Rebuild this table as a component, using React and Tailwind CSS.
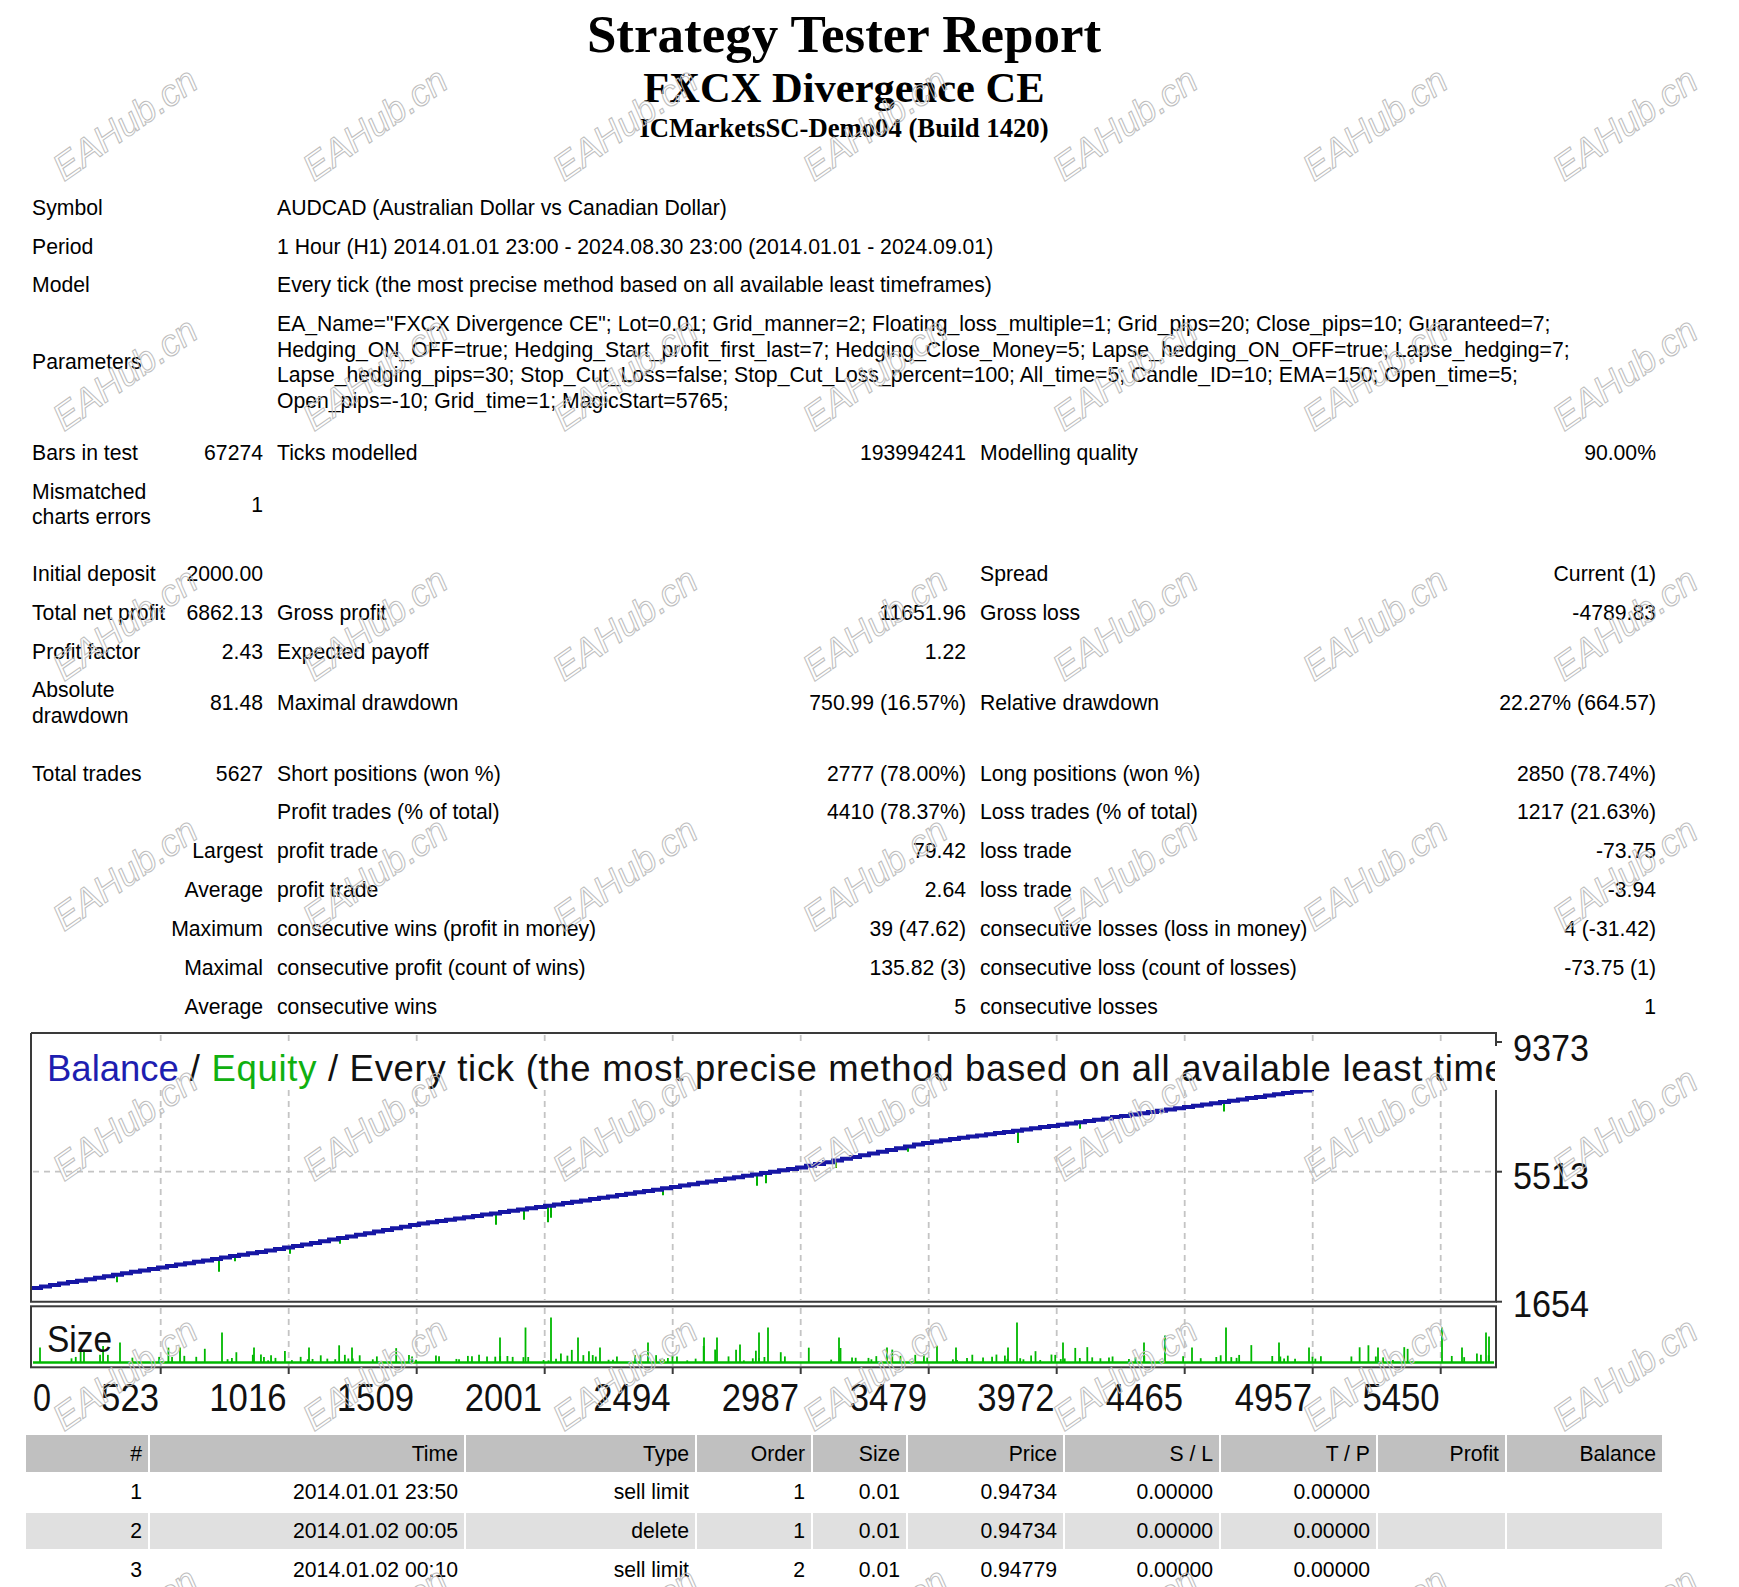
import React from "react";

const SANS = "font-['Liberation_Sans',Arial,sans-serif]";

function Cell({ children, right, className = "" }) {
  return (
    <div
      className={
        "flex items-center px-[6px] py-[5.675px] whitespace-nowrap " +
        (right ? "justify-end text-right " : "") +
        className
      }
    >
      <div>{children}</div>
    </div>
  );
}

function Empty({ className = "" }) {
  return <div className={className} />;
}

const anchors = [
  [32, 1289],
  [160.7, 1268],
  [288, 1248],
  [416, 1225],
  [543, 1207],
  [671, 1188],
  [800, 1168],
  [927.5, 1143],
  [1056, 1126],
  [1184, 1108],
  [1312, 1090],
];

function ly(x) {
  for (let i = 0; i < anchors.length - 1; i++) {
    const [x0, y0] = anchors[i];
    const [x1, y1] = anchors[i + 1];
    if (x <= x1) {
      return y0 + ((x - x0) / (x1 - x0)) * (y1 - y0);
    }
  }
  return anchors[anchors.length - 1][1];
}

function Chart() {
  const gx = Array.from({ length: 11 }, (_, k) => 160.7 + 128 * k);

  let d = `M32 ${ly(32).toFixed(1)}`;
  for (let x = 32; x < 1312; x += 9) {
    const nx = Math.min(x + 9, 1312);
    d += ` H${nx.toFixed(1)} V${ly(nx).toFixed(1)}`;
  }

  const dips = [
    [117, 6],
    [219, 12],
    [235, 4],
    [290, 5],
    [340, 4],
    [496, 10],
    [524, 9],
    [548, 15],
    [551, 11],
    [663, 5],
    [757, 10],
    [766, 9],
    [836, 6],
    [908, 4],
    [1018, 11],
    [1080, 5],
    [1224, 8],
  ];

  let s = 987654;
  const rnd = () => {
    s = (s * 16807) % 2147483647;
    return s / 2147483647;
  };
  const bars = [];
  for (let x = 35; x < 1493; x += 4) {
    const r = rnd();
    if (r < 0.42) {
      let h = 2 + rnd() * 6;
      if (rnd() < 0.18) h = 8 + rnd() * 10;
      bars.push([x + rnd() * 2, h]);
    }
  }
  const tall = [
    [40, 15], [120, 20], [180, 15], [222, 30], [254, 15], [309, 15], [352, 15],
    [500, 25], [525.5, 35], [551, 45], [578, 25], [600, 15], [648, 20], [704, 25],
    [717, 25], [740, 18], [759, 30], [768, 35], [839, 25], [887, 15], [956, 15],
    [1008, 15], [1017, 40], [1063, 20], [1144, 20], [1165, 27], [1192, 15],
    [1226, 35], [1279, 20], [1309, 15], [1378, 15], [1442, 35], [1462, 15],
    [1486, 30], [1489, 26],
  ];
  const allBars = bars.concat(tall);

  const xl = [
    ["523", 159],
    ["1016", 286.5],
    ["1509", 414],
    ["2001", 542],
    ["2494", 670.5],
    ["2987", 799],
    ["3479", 927],
    ["3972", 1054.5],
    ["4465", 1183],
    ["4957", 1312],
    ["5450", 1439.6],
  ];
  const yl = [
    ["9373", 1062],
    ["5513", 1190],
    ["1654", 1318],
  ];

  return (
    <svg width="1640" height="406" className="block" xmlns="http://www.w3.org/2000/svg">
      <defs>
        <clipPath id="titleclip">
          <rect x="0" y="1000" width="1495" height="200" />
        </clipPath>
      </defs>
      <g transform="translate(-24 -1028)">
        {gx.map((x, i) => (
          <g key={i}>
            <line x1={x} y1="1036" x2={x} y2="1301" stroke="#c4c4c4" strokeWidth="1.8" strokeDasharray="6 5" />
            <line x1={x} y1="1309" x2={x} y2="1367" stroke="#c4c4c4" strokeWidth="1.8" strokeDasharray="6 5" />
          </g>
        ))}
        <line x1="33" y1="1172.7" x2="1495" y2="1172.7" stroke="#c4c4c4" strokeWidth="1.8" strokeDasharray="6 5" />

        {dips.map(([x, dd], i) => {
          const y = ly(x);
          return <line key={i} x1={x} y1={y} x2={x} y2={y + 2 + dd} stroke="#00b000" strokeWidth="2" />;
        })}
        <path d={d} fill="none" stroke="#1616a4" strokeWidth="4" strokeLinejoin="miter" />

        {allBars.map(([x, h], i) => (
          <line key={i} x1={x} y1="1363.5" x2={x} y2={1363.5 - h} stroke="#00b800" strokeWidth="1.8" />
        ))}
        <line x1="33" y1="1363.5" x2="1494" y2="1363.5" stroke="#00b800" strokeWidth="2.4" />

        <rect x="40" y="1047" width="1460" height="44" fill="#ffffff" />
        <g clipPath="url(#titleclip)">
          <text x="47" y="1082" fontFamily="Liberation Sans, Arial, sans-serif" fontSize="36.5" fill="#111111">
            <tspan fill="#1e1eb0">Balance</tspan>
            <tspan letterSpacing="0.7"> / </tspan>
            <tspan fill="#10b010" letterSpacing="0.7">Equity</tspan>
            <tspan letterSpacing="0.7"> / Every tick (the most precise method based on all available least timeframes)</tspan>
          </text>
        </g>

        <path d="M31 1034 H1496 V1047 M1496 1091 V1302.7 H31 V1034" fill="none" stroke="#3a3a3a" strokeWidth="2" />
        <rect x="31" y="1307.3" width="1465" height="61" fill="none" stroke="#3a3a3a" strokeWidth="2" />

        {[1043, 1172.7, 1302.7].map((y, i) => (
          <line key={i} x1="1496" y1={y} x2="1502" y2={y} stroke="#3a3a3a" strokeWidth="2" />
        ))}
        {gx.map((x, i) => (
          <line key={i} x1={x} y1="1368" x2={x} y2="1375" stroke="#3a3a3a" strokeWidth="2" />
        ))}

        <text x="47" y="1353" fontFamily="Liberation Sans, Arial, sans-serif" fontSize="37" textLength="65" lengthAdjust="spacingAndGlyphs" fill="#111111">
          Size
        </text>

        <text x="33" y="1412" fontFamily="Liberation Sans, Arial, sans-serif" fontSize="39" textLength="18" lengthAdjust="spacingAndGlyphs" fill="#111111">
          0
        </text>
        {xl.map(([t, r], i) => {
          const w = t.length * 19.3;
          return (
            <text key={i} x={r - w} y="1412" fontFamily="Liberation Sans, Arial, sans-serif" fontSize="39" textLength={w} lengthAdjust="spacingAndGlyphs" fill="#111111">
              {t}
            </text>
          );
        })}
        {yl.map(([t, y], i) => (
          <text key={i} x="1513" y={y} fontFamily="Liberation Sans, Arial, sans-serif" fontSize="37" textLength="76" lengthAdjust="spacingAndGlyphs" fill="#111111">
            {t}
          </text>
        ))}
      </g>
    </svg>
  );
}

function Watermarks() {
  const items = [];
  for (let j = 0; j < 7; j++) {
    for (let i = 0; i < 7; i++) {
      items.push([125 + 250 * i, 124 + 250 * j]);
    }
  }
  return (
    <div className="pointer-events-none absolute inset-0">
      {items.map(([x, y], k) => (
        <div
          key={k}
          className={
            "absolute -translate-x-1/2 -translate-y-1/2 rotate-[-35deg] whitespace-nowrap italic text-[37px] leading-none text-transparent [-webkit-text-stroke:1px_#bdbdbd] " +
            SANS
          }
          style={{ left: x, top: y }}
        >
          EAHub.cn
        </div>
      ))}
    </div>
  );
}

export default function App() {
  const tradeCols =
    "grid grid-cols-[122px_314px_229px_114px_93px_155px_154px_155px_127px_155px] gap-[2px] px-[2px]";
  const rows = [
    ["1", "2014.01.01 23:50", "sell limit", "1", "0.01", "0.94734", "0.00000", "0.00000", "", ""],
    ["2", "2014.01.02 00:05", "delete", "1", "0.01", "0.94734", "0.00000", "0.00000", "", ""],
    ["3", "2014.01.02 00:10", "sell limit", "2", "0.01", "0.94779", "0.00000", "0.00000", "", ""],
  ];
  const head = ["#", "Time", "Type", "Order", "Size", "Price", "S / L", "T / P", "Profit", "Balance"];

  return (
    <div className={"relative w-[1739px] h-[1587px] overflow-hidden bg-white text-black " + SANS}>
      <div className="ml-[24px] w-[1640px]">
        <div className="pt-[4px] text-center font-['Liberation_Serif','Times_New_Roman',serif] font-bold">
          <div className="text-[53px] leading-[60px]">Strategy Tester Report</div>
          <div className="text-[42.5px] leading-[47px]">FXCX Divergence CE</div>
          <div className="text-[26.7px] leading-[34px]">ICMarketsSC-Demo04 (Build 1420)</div>
        </div>

        <div className="mt-[42px] grid grid-cols-[150px_91px_429px_270px_386px_300px] gap-[2px] p-[2px] text-[21.2px] leading-[25.5px]">
          <Cell className="col-span-2">Symbol</Cell>
          <Cell className="col-span-4">AUDCAD (Australian Dollar vs Canadian Dollar)</Cell>

          <Cell className="col-span-2">Period</Cell>
          <Cell className="col-span-4">1 Hour (H1) 2014.01.01 23:00 - 2024.08.30 23:00 (2014.01.01 - 2024.09.01)</Cell>

          <Cell className="col-span-2">Model</Cell>
          <Cell className="col-span-4">Every tick (the most precise method based on all available least timeframes)</Cell>

          <Cell className="col-span-2">Parameters</Cell>
          <Cell className="col-span-4">
            <div>EA_Name="FXCX Divergence CE"; Lot=0.01; Grid_manner=2; Floating_loss_multiple=1; Grid_pips=20; Close_pips=10; Guaranteed=7;</div>
            <div>Hedging_ON_OFF=true; Hedging_Start_profit_first_last=7; Hedging_Close_Money=5; Lapse_hedging_ON_OFF=true; Lapse_hedging=7;</div>
            <div>Lapse_hedging_pips=30; Stop_Cut_Loss=false; Stop_Cut_Loss_percent=100; All_time=5; Candle_ID=10; EMA=150; Open_time=5;</div>
            <div>Open_pips=-10; Grid_time=1; MagicStart=5765;</div>
          </Cell>

          <div className="col-span-6 h-[11.4px]" />

          <Cell>Bars in test</Cell>
          <Cell right>67274</Cell>
          <Cell>Ticks modelled</Cell>
          <Cell right>193994241</Cell>
          <Cell>Modelling quality</Cell>
          <Cell right>90.00%</Cell>

          <Cell>
            Mismatched
            <br />
            charts errors
          </Cell>
          <Cell right>1</Cell>
          <Empty className="col-span-4" />

          <div className="col-span-6 h-[15.8px]" />

          <Cell>Initial deposit</Cell>
          <Cell right>2000.00</Cell>
          <Empty />
          <Empty />
          <Cell>Spread</Cell>
          <Cell right>Current (1)</Cell>

          <Cell>Total net profit</Cell>
          <Cell right>6862.13</Cell>
          <Cell>Gross profit</Cell>
          <Cell right>11651.96</Cell>
          <Cell>Gross loss</Cell>
          <Cell right>-4789.83</Cell>

          <Cell>Profit factor</Cell>
          <Cell right>2.43</Cell>
          <Cell>Expected payoff</Cell>
          <Cell right>1.22</Cell>
          <Empty />
          <Empty />

          <Cell>
            Absolute
            <br />
            drawdown
          </Cell>
          <Cell right>81.48</Cell>
          <Cell>Maximal drawdown</Cell>
          <Cell right>750.99 (16.57%)</Cell>
          <Cell>Relative drawdown</Cell>
          <Cell right>22.27% (664.57)</Cell>

          <div className="col-span-6 h-[16.8px]" />

          <Cell>Total trades</Cell>
          <Cell right>5627</Cell>
          <Cell>Short positions (won %)</Cell>
          <Cell right>2777 (78.00%)</Cell>
          <Cell>Long positions (won %)</Cell>
          <Cell right>2850 (78.74%)</Cell>

          <Empty />
          <Empty />
          <Cell>Profit trades (% of total)</Cell>
          <Cell right>4410 (78.37%)</Cell>
          <Cell>Loss trades (% of total)</Cell>
          <Cell right>1217 (21.63%)</Cell>

          <Cell right className="col-span-2">Largest</Cell>
          <Cell>profit trade</Cell>
          <Cell right>79.42</Cell>
          <Cell>loss trade</Cell>
          <Cell right>-73.75</Cell>

          <Cell right className="col-span-2">Average</Cell>
          <Cell>profit trade</Cell>
          <Cell right>2.64</Cell>
          <Cell>loss trade</Cell>
          <Cell right>-3.94</Cell>

          <Cell right className="col-span-2">Maximum</Cell>
          <Cell>consecutive wins (profit in money)</Cell>
          <Cell right>39 (47.62)</Cell>
          <Cell>consecutive losses (loss in money)</Cell>
          <Cell right>4 (-31.42)</Cell>

          <Cell right className="col-span-2">Maximal</Cell>
          <Cell>consecutive profit (count of wins)</Cell>
          <Cell right>135.82 (3)</Cell>
          <Cell>consecutive loss (count of losses)</Cell>
          <Cell right>-73.75 (1)</Cell>

          <Cell right className="col-span-2">Average</Cell>
          <Cell>consecutive wins</Cell>
          <Cell right>5</Cell>
          <Cell>consecutive losses</Cell>
          <Cell right>1</Cell>
        </div>

        <Chart />

        <div className="pt-[2px] text-[21.2px] leading-[25.5px]">
          <div className={tradeCols}>
            {head.map((h, i) => (
              <Cell key={i} right className="bg-[#c0c0c0]">
                {h}
              </Cell>
            ))}
          </div>
          {rows.map((r, ri) => (
            <div key={ri} className={tradeCols + " mt-[2px]"}>
              {r.map((v, i) => (
                <Cell key={i} right className={ri % 2 === 1 ? "bg-[#e0e0e0]" : ""}>
                  {v}
                </Cell>
              ))}
            </div>
          ))}
        </div>
      </div>
      <Watermarks />
    </div>
  );
}
